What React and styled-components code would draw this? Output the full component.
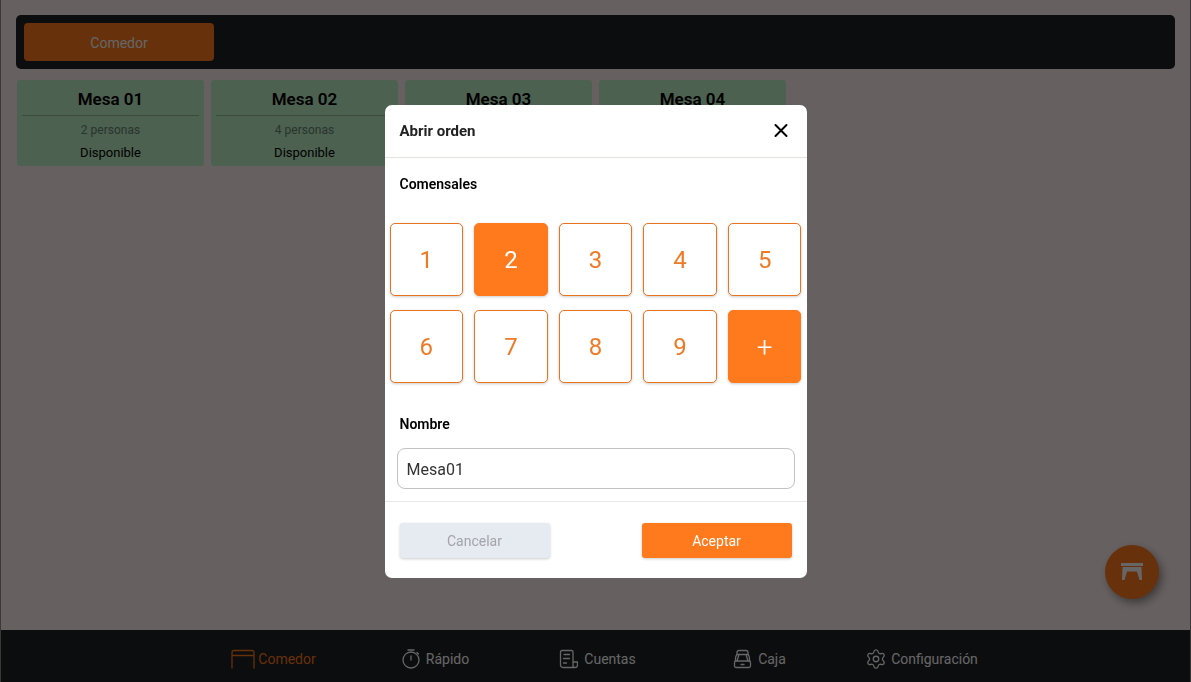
import React, { useState } from "react";
import styled, { createGlobalStyle } from "styled-components";
import { Settings } from "lucide-react";

const GlobalStyle = createGlobalStyle`
  * {
    box-sizing: border-box;
  }
  body {
    margin: 0;
    font-family: Roboto, "Liberation Sans", sans-serif;
    background: #fff2f0;
  }
  button,
  input {
    font-family: inherit;
  }
`;

const Page = styled.div`
  min-height: 100vh;
  display: flex;
  flex-direction: column;
  background: #fff2f0;
  border: solid #8c8c8c;
  border-width: 0 1px;
`;

const Main = styled.main`
  flex: 1;
  padding: 15px;
`;

const AreaBar = styled.div`
  display: flex;
  padding: 8px;
  border-radius: 5px;
  background: #1e2123;
`;

const AreaButton = styled.button`
  width: 190px;
  height: 38px;
  padding: 2px 0 0;
  border: none;
  border-radius: 4px;
  background: #ff7a1c;
  color: #fff;
  font-size: 14px;
`;

const Tables = styled.div`
  display: flex;
  flex-wrap: wrap;
  gap: 7px;
  margin-top: 11px;
  padding: 0 1px;
`;

const TableCard = styled.article`
  width: 187px;
  padding: 7px 5px 1px;
  border-radius: 3px;
  background: #bef2c8;
  text-align: center;
  color: #000;

  h2 {
    margin: 0 0 5px;
    padding-bottom: 4px;
    border-bottom: 1px solid #94bd9d;
    font-size: 17px;
    font-weight: 600;
    line-height: 24px;
  }
  p {
    margin: 0;
    font-size: 12px;
    line-height: 18px;
    color: #6a8470;
  }
  strong {
    display: block;
    padding-top: 2px;
    font-size: 13px;
    font-weight: 400;
    line-height: 24px;
  }
`;

const BottomNav = styled.nav`
  display: flex;
  justify-content: center;
  padding: 17px 0 11px 4px;
  background: #1e2123;
`;

const NavItem = styled.a`
  flex: 0 1 162px;
  display: flex;
  align-items: center;
  justify-content: center;
  gap: ${(props) => props.$gap || 6}px;
  font-size: 14px;
  line-height: 24px;
  text-decoration: none;
  color: ${(props) => (props.$active ? "#ff7a1c" : "#fff")};
`;

const Fab = styled.button`
  position: fixed;
  right: 32px;
  bottom: 83px;
  width: 54px;
  height: 54px;
  display: flex;
  align-items: center;
  justify-content: center;
  border: none;
  border-radius: 50%;
  background: #ff7a1c;
  box-shadow: 3px 4px 8px rgba(0, 0, 0, 0.4);
  color: #fff;
`;

const Overlay = styled.div`
  position: fixed;
  inset: 0;
  display: flex;
  align-items: center;
  justify-content: center;
  background: rgba(0, 0, 0, 0.6);
`;

const Modal = styled.form`
  width: 422px;
  max-width: 100%;
  border-radius: 7px;
  background: #fff;
`;

const ModalHeader = styled.header`
  display: flex;
  align-items: center;
  justify-content: space-between;
  height: 53px;
  padding: 0 17px 0 15px;
  border-bottom: 1px solid #e3e3df;

  h1 {
    margin: 0;
    font-size: 15px;
    font-weight: 700;
    line-height: 20px;
    color: #222;
  }
`;

const CloseButton = styled.button`
  display: flex;
  padding: 0;
  border: none;
  background: none;
  color: #000;
`;

const SectionTitle = styled.div`
  display: block;
  padding: 16px 15px 0;
  font-size: 14px;
  font-weight: 600;
  line-height: 20px;
  color: #000;
`;

const Keypad = styled.div`
  display: grid;
  grid-template-columns: repeat(5, 1fr);
  gap: 14px 11px;
  padding: 29px 5px 15px;
`;

const Key = styled.button`
  height: 73px;
  padding: 2px 0 0;
  border: 1px solid ${(props) => (props.$filled ? "#ff7a1c" : "#e8741f")};
  border-radius: 5px;
  background: ${(props) => (props.$filled ? "#ff7a1c" : "#fff")};
  box-shadow: 0 1px 3px rgba(0, 0, 0, 0.2);
  color: ${(props) => (props.$filled ? "#fff" : "#ee7a25")};
  font-size: 24px;
`;

const MoreKey = styled(Key)`
  font-size: 28px;
  font-weight: 300;
`;

const NameInput = styled.input`
  display: block;
  width: calc(100% - 24px);
  height: 41px;
  margin: 14px 12px 12px;
  padding: 2px 9px 0;
  border: 1px solid #c3c3c3;
  border-radius: 8px;
  background: #fff;
  color: #333;
  font-size: 16px;
  outline: none;
`;

const ModalFooter = styled.footer`
  display: flex;
  justify-content: space-between;
  padding: 21px 15px 20px;
  border-top: 1px solid #e8e8e8;
`;

const Action = styled.button`
  width: 150px;
  height: 35px;
  padding: 2px 0 0;
  border: none;
  border-radius: 3px;
  background: ${(props) => (props.$primary ? "#ff7a1c" : "#e6eaf1")};
  box-shadow: 0 1px 3px rgba(0, 0, 0, 0.2);
  color: ${(props) => (props.$primary ? "#fff" : "#a3a4a8")};
  font-size: 14px;
`;

const Icon = ({ size = 20, width, children }) => (
  <svg
    width={width || size}
    height={size}
    viewBox={`0 0 ${width || size} ${size}`}
    fill="none"
    stroke="currentColor"
    strokeWidth="1.3"
    strokeLinecap="round"
    strokeLinejoin="round"
    aria-hidden="true"
  >
    {children}
  </svg>
);

const TableIcon = () => (
  <Icon width={24}>
    <path d="M1 19V3.500Q1 1.500 3 1.500H21Q23 1.500 23 3.500V19M1 6.500H23" />
  </Icon>
);

const TimerIcon = () => (
  <Icon width={18}>
    <circle cx="9" cy="11" r="8" />
    <path d="M6 1H12M9 7V11M15 3.500L16.500 5" />
  </Icon>
);

const BillIcon = () => (
  <Icon width={19}>
    <path d="M14.500 18.500H4Q1.500 18.500 1.500 16V3Q1.500 1.500 3 1.500H12.500Q14 1.500 14 3V16.500Q14 18.500 16 18.500Q18.500 18.500 18.500 16V13H14" />
    <path d="M5 5.500H10.500M4.500 9.500H10.500M4.500 14H7.500" />
  </Icon>
);

const RegisterIcon = () => (
  <Icon width={19}>
    <rect x="1.500" y="12" width="16" height="6.500" rx="1.500" />
    <path d="M4 5.500V3.500Q4 1.500 6 1.500H13Q15 1.500 15 3.500V5.500M4 5.500H15" />
    <path d="M6 5.500L4 12M13 5.500L15 12M4 5.500Q2.500 7 2.500 9.500V12M15 5.500Q16.500 7 16.500 9.500V12M8 15.500H11" />
  </Icon>
);

const StoolIcon = () => (
  <svg width="22" height="18" viewBox="0 0 22 18" fill="currentColor" aria-hidden="true">
    <path d="M0 0H22V3H0ZM1.500 4H20.500L21 17H18.500L16 8.500H6L3.500 17H1Z" />
  </svg>
);

const CrossIcon = () => (
  <svg width="18" height="18" viewBox="0 0 18 18" stroke="currentColor" strokeWidth="2" strokeLinecap="round" aria-hidden="true">
    <path d="M3.500 3L14.500 14M14.500 3L3.500 14" />
  </svg>
);

const tables = [
  { name: "Mesa 01", seats: 2 },
  { name: "Mesa 02", seats: 4 },
  { name: "Mesa 03" },
  { name: "Mesa 04" },
];

const links = [
  { label: "Comedor", icon: <TableIcon />, active: true, gap: 3 },
  { label: "Rápido", icon: <TimerIcon /> },
  { label: "Cuentas", icon: <BillIcon /> },
  { label: "Caja", icon: <RegisterIcon /> },
  { label: "Configuración", icon: <Settings size={22} strokeWidth={1.4} />, gap: 4 },
];

const App = () => {
  const [guests, setGuests] = useState(2);
  const [name, setName] = useState("Mesa01");
  const [open, setOpen] = useState(true);

  const close = () => {
    setOpen(false);
  };

  return (
    <>
      <GlobalStyle />
      <Page>
        <Main>
          <AreaBar>
            <AreaButton type="button">Comedor</AreaButton>
          </AreaBar>
          <Tables>
            {tables.map((table) => (
              <TableCard key={table.name}>
                <h2>{table.name}</h2>
                {table.seats && <p>{table.seats} personas</p>}
                {table.seats && <strong>Disponible</strong>}
              </TableCard>
            ))}
          </Tables>
        </Main>
        <BottomNav>
          {links.map((link) => (
            <NavItem key={link.label} href="#" $active={link.active} $gap={link.gap}>
              {link.icon}
              {link.label}
            </NavItem>
          ))}
        </BottomNav>
      </Page>
      <Fab type="button" aria-label="Mesas" onClick={() => setOpen(true)}>
        <StoolIcon />
      </Fab>
      {open && (
        <Overlay>
          <Modal onSubmit={(e) => e.preventDefault()}>
            <ModalHeader>
              <h1>Abrir orden</h1>
              <CloseButton type="button" aria-label="Cerrar" onClick={close}>
                <CrossIcon />
              </CloseButton>
            </ModalHeader>
            <SectionTitle id="guests">Comensales</SectionTitle>
            <Keypad role="group" aria-labelledby="guests">
              {[1, 2, 3, 4, 5, 6, 7, 8, 9].map((n) => (
                <Key key={n} type="button" $filled={n === guests} onClick={() => setGuests(n)}>
                  {n}
                </Key>
              ))}
              <MoreKey type="button" $filled onClick={() => setGuests(guests + 1)}>
                +
              </MoreKey>
            </Keypad>
            <SectionTitle as="label" htmlFor="name">
              Nombre
            </SectionTitle>
            <NameInput id="name" value={name} onChange={(e) => setName(e.target.value)} />
            <ModalFooter>
              <Action type="button" onClick={close}>
                Cancelar
              </Action>
              <Action type="submit" $primary>
                Aceptar
              </Action>
            </ModalFooter>
          </Modal>
        </Overlay>
      )}
    </>
  );
};

export default App;
